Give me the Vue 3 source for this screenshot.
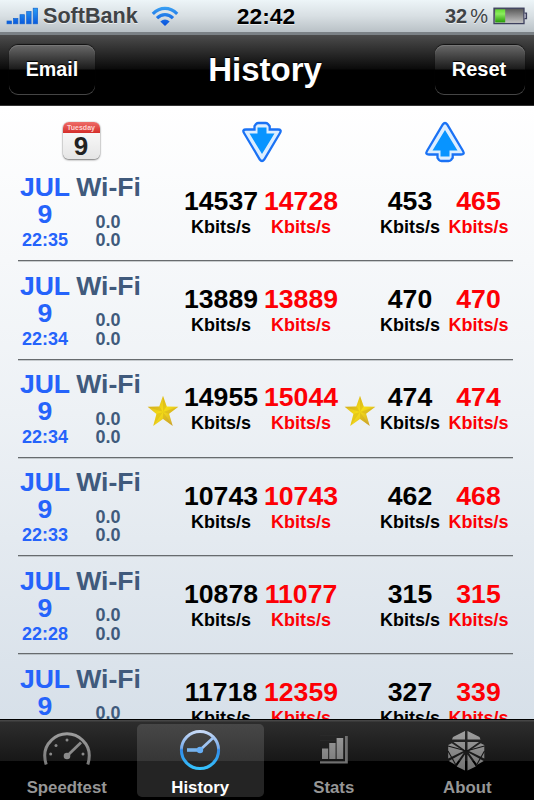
<script setup>
const rows = [
  { time: '22:35', down: 14537, downMax: 14728, up: 453, upMax: 465 },
  { time: '22:34', down: 13889, downMax: 13889, up: 470, upMax: 470 },
  { time: '22:34', down: 14955, downMax: 15044, up: 474, upMax: 474, best: true },
  { time: '22:33', down: 10743, downMax: 10743, up: 462, upMax: 468 },
  { time: '22:28', down: 10878, downMax: 11077, up: 315, upMax: 315 },
  { time: '', down: 11718, downMax: 12359, up: 327, upMax: 339 },
]
</script>

<template>
  <div class="phone">
    <header class="status">
      <div class="carrier">
        <svg class="signal" width="33" height="18" viewBox="0 0 33 18">
          <defs>
            <linearGradient id="sig" x1="0" y1="0" x2="0" y2="18" gradientUnits="userSpaceOnUse">
              <stop offset="0" stop-color="#2da3f6" /><stop offset="1" stop-color="#0754dc" />
            </linearGradient>
          </defs>
          <g fill="url(#sig)" stroke="#1263d0" stroke-width=".7">
            <rect x="1" y="14" width="4.4" height="2.8" />
            <rect x="7.5" y="11.5" width="4.4" height="5.3" />
            <rect x="14" y="7.7" width="4.4" height="9.1" />
            <rect x="20.7" y="4.6" width="4.4" height="12.2" />
            <rect x="27.2" y="1.2" width="4.4" height="15.6" />
          </g>
        </svg>
        <span class="name">SoftBank</span>
        <svg class="wifi" width="28" height="21" viewBox="0 0 28 21">
          <defs>
            <linearGradient id="wf" x1="0" y1="0" x2="0" y2="20" gradientUnits="userSpaceOnUse">
              <stop offset="0" stop-color="#3ba4f4" /><stop offset="1" stop-color="#0750dc" />
            </linearGradient>
          </defs>
          <g fill="none" stroke="url(#wf)" stroke-width="3.2">
            <path d="M1.8 7.8Q7.4 2.3 14 2.3T26.2 7.8" />
            <path d="M6 12.2Q9.6 8.6 14 8.6T22 12.2" />
          </g>
          <path d="M9.3 15.5Q14 11.6 18.7 15.5L14 20Z" fill="url(#wf)" />
        </svg>
      </div>
      <div class="clock">22:42</div>
      <div class="power">
        <span class="pct">32</span><span class="sign">%</span>
        <svg width="35" height="18" viewBox="0 0 35 18">
          <defs>
            <linearGradient id="bat" x1="0" y1="0" x2="0" y2="1">
              <stop offset="0" stop-color="#555" /><stop offset="1" stop-color="#c8c8c8" />
            </linearGradient>
            <linearGradient id="chg" x1="0" y1="0" x2="0" y2="1">
              <stop offset="0" stop-color="#62dd31" /><stop offset=".35" stop-color="#8cec5f" /><stop offset="1" stop-color="#249b05" />
            </linearGradient>
          </defs>
          <rect x="1" y="1.2" width="30" height="15.4" fill="url(#bat)" stroke="#3d405e" stroke-width="1.3" />
          <rect x="2.2" y="2.4" width="10" height="13" fill="url(#chg)" />
          <path d="M31.5 6.2h2v5.4h-2" fill="#aab" stroke="#3d405e" stroke-width="1.2" />
        </svg>
      </div>
    </header>

    <nav class="navbar">
      <button class="btn email">Email</button>
      <h1>History</h1>
      <button class="btn reset">Reset</button>
    </nav>

    <main class="content">
      <div class="heads">
        <div class="cal">
          <div class="day">Tuesday</div>
          <div class="num">9</div>
        </div>
        <svg class="arrow" width="42" height="42" viewBox="0 0 42 42">
          <path class="outer" d="M13.5 5.2 15 3Q16 2 17.5 2h7Q26 2 27 3l1.7 2.2v3.3H37Q41 8.5 39 12L23.2 38.5Q21 41.5 18.8 38.5L3 12Q1 8.5 5 8.5h8.5Z" />
          <path class="inner" d="M16.5 6.500h9v6h8L21 33 8.500 12.500h8Z" />
        </svg>
        <svg class="arrow" width="42" height="42" viewBox="0 0 42 42">
          <g transform="matrix(1 0 0 -1 0 42)">
            <path class="outer" d="M13.5 5.2 15 3Q16 2 17.5 2h7Q26 2 27 3l1.7 2.2v3.3H37Q41 8.5 39 12L23.2 38.5Q21 41.5 18.8 38.5L3 12Q1 8.5 5 8.5h8.5Z" />
            <path class="inner" d="M16.5 6.500h9v6h8L21 33 8.500 12.500h8Z" />
          </g>
        </svg>
      </div>

      <section v-for="(r, i) in rows" :key="i" class="row">
        <div class="date">
          <div class="big">JUL</div>
          <div class="big">9</div>
          <div class="time">{{ r.time }}</div>
        </div>
        <div class="net">
          <div class="big">Wi-Fi</div>
          <div class="geo">0.0<br>0.0</div>
        </div>
        <div class="star">
          <svg v-if="r.best" width="32" height="32" viewBox="0 0 32 32">
            <defs>
              <linearGradient id="gold" x1="0" y1="0" x2="1" y2="1">
                <stop offset="0" stop-color="#cda329" /><stop offset=".5" stop-color="#f7df14" /><stop offset="1" stop-color="#c4983c" />
              </linearGradient>
            </defs>
            <path d="M16 .8 19.8 11.5 31.4 11.8 22.1 18.7 25.8 31 16 24 6.2 31 9.4 18.9.6 11.8 12.2 11.5Z" fill="url(#gold)" />
            <path d="M16 17V1.5l3.6 10ZM16 17 31 12l-9.3 6.7ZM16 17l9.5 13.5L16 23.8ZM16 17 6.5 30.5 9.6 19ZM16 17 1 12l11.4-.4Z" fill="#b98b20" opacity=".25" />
          </svg>
        </div>
        <div class="speed"><div class="big">{{ r.down }}</div><div class="unit">Kbits/s</div></div>
        <div class="speed max"><div class="big">{{ r.downMax }}</div><div class="unit">Kbits/s</div></div>
        <div class="star second">
          <svg v-if="r.best" width="32" height="32" viewBox="0 0 32 32">
            <path d="M16 .8 19.8 11.5 31.4 11.8 22.1 18.7 25.8 31 16 24 6.2 31 9.4 18.9.6 11.8 12.2 11.5Z" fill="url(#gold)" />
            <path d="M16 17V1.5l3.6 10ZM16 17 31 12l-9.3 6.7ZM16 17l9.5 13.5L16 23.8ZM16 17 6.5 30.5 9.6 19ZM16 17 1 12l11.4-.4Z" fill="#b98b20" opacity=".25" />
          </svg>
        </div>
        <div class="speed"><div class="big">{{ r.up }}</div><div class="unit">Kbits/s</div></div>
        <div class="speed max"><div class="big">{{ r.upMax }}</div><div class="unit">Kbits/s</div></div>
      </section>
    </main>

    <footer class="tabs">
      <div class="tab">
        <svg width="50" height="42" viewBox="0 0 50 42">
          <defs>
            <linearGradient id="gr" x1="0" y1="0" x2="0" y2="42" gradientUnits="userSpaceOnUse">
              <stop offset="0" stop-color="#a0a0a0" /><stop offset="1" stop-color="#707070" />
            </linearGradient>
          </defs>
          <path d="M4.2 34.5Q-.4 19.5 9.3 10.3A22 22 0 0 1 40.7 10.3Q50.4 19.5 45.8 34.5" fill="none" stroke="url(#gr)" stroke-width="3" />
          <path d="m25 26 14-13.5" stroke="#8a8a8a" stroke-width="2.8" />
          <g fill="#8a8a8a">
            <circle cx="25" cy="26" r="3.3" /><circle cx="25" cy="10" r="1.5" /><circle cx="14" cy="15.5" r="1.5" />
            <circle cx="8.7" cy="24" r="1.5" /><circle cx="41" cy="24" r="1.5" />
          </g>
        </svg>
        <span>Speedtest</span>
      </div>
      <div class="tab active">
        <div class="pill">
          <svg width="42" height="42" viewBox="0 0 42 42">
            <defs>
              <linearGradient id="hb" x1="0" y1="0" x2="0" y2="42" gradientUnits="userSpaceOnUse">
                <stop offset="0" stop-color="#d1dff7" /><stop offset=".45" stop-color="#79acec" />
                <stop offset=".5" stop-color="#318ae8" /><stop offset="1" stop-color="#36c9ff" />
              </linearGradient>
            </defs>
            <circle cx="21" cy="21" r="18.6" fill="none" stroke="url(#hb)" stroke-width="3" />
            <path d="m21 21 13.5-12.5" stroke="#9fc3f2" stroke-width="2.8" />
            <path d="M8 19.2h13v3.6H8Z" fill="#79b3ec" />
            <circle cx="21" cy="21" r="3.2" fill="#66aef5" />
          </svg>
          <span>History</span>
        </div>
      </div>
      <div class="tab">
        <svg width="42" height="42" viewBox="0 0 42 42">
          <g fill="#292929"><path d="M7 5h18v1H7ZM7 10h15v1H7Z" /></g>
          <g fill="url(#gr)">
            <path d="M9 18.5h6.2V29H9ZM16.2 13h6.4v16h-6.4ZM23.6 8h6.6v21h-6.6Z" />
            <path d="M32 6h2.8v27.5H7v-2.3h25Z" fill="#707070" />
          </g>
        </svg>
        <span>Stats</span>
      </div>
      <div class="tab">
        <svg width="42" height="42" viewBox="0 0 42 42">
          <g fill="url(#gr)">
            <path d="M19 1 7 7 6 9.500h13ZM21.500 1l12 6 1 2.500h-13Z" />
            <path d="M7.500 12H19v8.200ZM33 12H21.500v8.200Z" />
            <path d="M5.800 13.200 17.500 21 2.200 28.500V15ZM34.700 13.200 23 21l15.300 7.500V15Z" />
            <path d="m17.800 22.800-8.600 12L2.800 31ZM22.700 22.800l8.600 12 6.400-3.800Z" />
            <path d="M19 24.500v16l-8.300-4ZM21.500 24.500v16l8.300-4Z" />
          </g>
          <path d="M2 21 10.500 36M38.500 21 30 36M2 16l18.300 5L38.500 16" fill="none" stroke="#151515" stroke-width="1.1" />
        </svg>
        <span>About</span>
      </div>
    </footer>
  </div>
</template>

<style>
body { margin: 0; overflow: hidden; background: #000; }
</style>

<style scoped>
.phone {
  width: 534px; height: 800px; overflow: hidden; box-sizing: border-box;
  display: flex; flex-direction: column;
  font-family: "Liberation Sans", Arial, sans-serif; font-weight: 700;
}
.status {
  flex: none; height: 35px; box-sizing: border-box; border-bottom: 3px solid #7b8186;
  background: linear-gradient(#edf5f8, #d8dfe3 50%, #b9c1c6);
  display: grid; grid-template-columns: 1fr auto 1fr; line-height: 32px; color: #404346;
  text-shadow: 0 1px 0 rgba(255, 255, 255, .6);
}
.carrier { display: flex; padding-left: 6px; }
.signal { margin-top: 7px; }
.name { font-size: 21.6px; margin-left: 4px; }
.wifi { margin: 6px 0 0 13px; }
.clock { font-size: 22.8px; color: #000; margin: 0 1px 0 -1px; }
.power { display: flex; justify-content: flex-end; padding-right: 6px; font-size: 20px; }
.sign { font-weight: 400; margin: 0 5px 0 3px; }
.power svg { margin: 7px 0 0; }
.navbar {
  flex: none; height: 71px; box-sizing: border-box; padding: 10px 9px 0;
  border-bottom: 1px solid #333;
  background: linear-gradient(#4c4c4c, #0a0a0a 34px, #000 35px);
  display: grid; grid-template-columns: 1fr auto 1fr; align-items: start;
}
h1 { margin: 1px 2px 0 -2px; font-size: 33px; line-height: 48px; color: #fff; text-shadow: 0 -1px 1px #000; }
.btn {
  height: 50px; padding: 0 0 2px; box-sizing: border-box; border: 0; border-radius: 9px;
  font: 700 20px/46px "Liberation Sans", Arial, sans-serif; color: #fff;
  background: linear-gradient(#696969, #1b1b1b 24px, #000 25px);
  box-shadow: inset 0 -1px 0 #454545, inset 0 1px 0 #777, 0 -1px 1px #111;
  text-shadow: 0 -1px 1px #000;
}
.email { width: 86px; font-size: 19.7px; }
.reset { width: 90px; justify-self: end; padding-right: 2px; }
.content {
  height: 613px; flex: none; box-sizing: border-box; overflow: hidden; padding: 0 21px 0 18px;
  background: linear-gradient(#fff, #edf1f5 50%, #d7e0e9);
}
.heads {
  height: 57px; display: grid; grid-template-columns: 126px 235px 132px; justify-items: center;
}
.cal {
  width: 37px; height: 37px; margin-top: 16px; border-radius: 6px; overflow: hidden;
  background: linear-gradient(#fff, #e5e5e5); box-shadow: 0 1px 2px #777, 0 0 1px #777; text-align: center;
}
.day { height: 11px; background: linear-gradient(#ee6d69, #d52e2a); color: #ffd5d3; font-size: 7px; line-height: 11px; }
.num { font-size: 26px; line-height: 26px; color: #222; }
.arrow { margin-top: 14.5px; }
.outer { fill: #dceeff; stroke: #1a72f5; stroke-width: 2.3; }
.inner { fill: #0894ff; }
.row {
  height: 98.3px; box-sizing: border-box; border-bottom: 1px solid #676b6e;
  box-shadow: 0 1px 0 rgba(145, 150, 153, .45);
  display: grid; grid-template-columns: 54px 73px 36px 80px 80px 35px 68px 69px;
  text-align: center; white-space: nowrap;
}
.big { font-size: 26.6px; line-height: 27px; }
.date, .net { padding-top: 11.4px; }
.date { color: #2563fb; }
.time { font-size: 18px; line-height: 25px; }
.net { color: #405a7c; }
.geo { font-size: 18px; line-height: 18.4px; margin-top: 11.6px; padding-right: 1px; }
.speed { padding-top: 24.700px; color: #000; }
.speed.max { color: #fd0005; }
.unit { font-size: 18px; line-height: 25.5px; }
.star { padding-top: 35px; display: flex; justify-content: center; }
.star svg { flex: none; }
.second { padding-left: 2px; }
.tabs {
  flex: none; height: 81px; box-sizing: border-box; border-top: 1px solid #000;
  background: linear-gradient(#464646 1px, #2d2d2d 2px, #171717 41px, #000 41px);
  display: grid; grid-template-columns: repeat(4, 133.5px);
  font-size: 16.8px; color: #969696;
}
.tab { display: flex; flex-direction: column; align-items: center; padding-top: 9.5px; }
.tab span { line-height: 20px; margin-top: auto; padding-bottom: 3px; }
.tab.active { padding: 4px 3.5px; }
.pill {
  width: 126.5px; height: 73px; border-radius: 5px; box-sizing: border-box; padding-top: 5px;
  background: linear-gradient(#474747, #363636 37px, #242424 37px);
  display: flex; flex-direction: column; align-items: center; color: #fff;
}
.pill span { padding-bottom: 0; margin-bottom: -1px; }
</style>
